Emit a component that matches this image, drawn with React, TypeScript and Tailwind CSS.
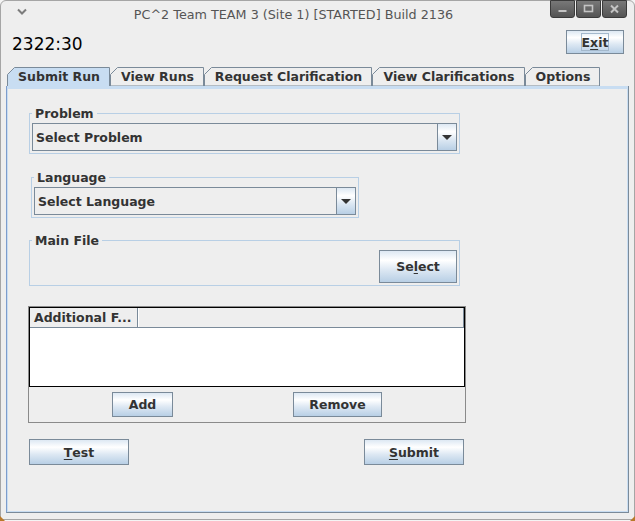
import React from "react";

const GRAD =
  "bg-[linear-gradient(to_bottom,#dde8f3_0%,#ffffff_30%,#dde8f3_60%,#b8cfe5_100%)]";

function Button({
  w,
  h,
  children,
}: {
  w: string;
  h: string;
  children: React.ReactNode;
}) {
  return (
    <div
      className={`${w} ${h} ${GRAD} flex shrink-0 items-center justify-center border border-[#7a8a99] text-[12.5px] leading-[15px] font-bold text-[#333333]`}
    >
      {children}
    </div>
  );
}

function U({ children }: { children: React.ReactNode }) {
  return (
    <span className="underline decoration-1 underline-offset-[2px]">
      {children}
    </span>
  );
}

function Combo({ w, h, label }: { w: string; h: string; label: string }) {
  return (
    <div className={`${w} ${h} flex border border-[#7a8a99] bg-[#eeeeee]`}>
      <div className="flex flex-1 items-center pl-[3px] text-[12.5px] leading-[15px] font-bold text-[#333333]">
        {label}
      </div>
      <div
        className={`${GRAD} flex w-[19px] items-center justify-center border-l border-[#7a8a99]`}
      >
        <svg width="10" height="5" viewBox="0 0 10 5">
          <path d="M0 0H10L5 5Z" fill="#333333" />
        </svg>
      </div>
    </div>
  );
}

type Tab = { label: string; w: string; px: number; sel?: boolean };

const tabs: Tab[] = [
  { label: "Submit Run", w: "w-[103px]", px: 103, sel: true },
  { label: "View Runs", w: "w-[94px]", px: 94 },
  { label: "Request Clarification", w: "w-[168px]", px: 168 },
  { label: "View Clarifications", w: "w-[153px]", px: 153 },
  { label: "Options", w: "w-[75px]", px: 75 },
];

function TabItem({ t }: { t: Tab }) {
  const W = t.px;
  return (
    <div
      className={`${t.w} relative flex h-[19px] shrink-0 items-center justify-center pl-[1px] text-[12.5px] leading-[15px] font-bold whitespace-nowrap text-[#333333]`}
    >
      <svg
        className="absolute inset-0"
        width={W}
        height={19}
        viewBox={`0 0 ${W} 19`}
      >
        <path
          d={`M0.5 19V7.5L7.5 0.5H${W - 0.5}V19${t.sel ? "" : "H0.5"}`}
          fill={t.sel ? "#c8ddf2" : "#eeeeee"}
          stroke="#7a8a99"
          strokeWidth="1"
        />
      </svg>
      <span className="relative">{t.label}</span>
    </div>
  );
}

function Ctrl({ kind }: { kind: "min" | "max" | "close" }) {
  return (
    <div className="flex h-[18px] w-[25px] items-center justify-center rounded-b-[3px] border border-[#3a3a3a] bg-[linear-gradient(to_bottom,#787878,#545454)]">
      <svg width="11" height="10" viewBox="0 0 11 10">
        {kind === "min" && <rect x="1.5" y="6" width="8" height="2" fill="#c4c4c4" />}
        {kind === "max" && (
          <rect
            x="1.5"
            y="1.5"
            width="8"
            height="6"
            fill="none"
            stroke="#c4c4c4"
            strokeWidth="1.6"
          />
        )}
        {kind === "close" && (
          <path
            d="M2 1.5L9 8.5M9 1.5L2 8.5"
            stroke="#c4c4c4"
            strokeWidth="2"
          />
        )}
      </svg>
    </div>
  );
}

export default function App() {
  return (
    <div className="relative h-[521px] w-[635px] overflow-hidden bg-[#f4f4f4] font-['DejaVu_Sans',sans-serif]">
      <div className="flex h-[520px] w-[635px] flex-col rounded-t-[6px] border border-[#a5a5a5] bg-[#eeeeee]">
        {/* title bar */}
        <div className="flex h-[21px] shrink-0 items-start">
          <div className="w-[36px] shrink-0">
            <svg
              className="mt-[7px] ml-[16px]"
              width="10"
              height="7"
              viewBox="0 0 10 7"
            >
              <path
                d="M1 1.5L5 5.5L9 1.5"
                fill="none"
                stroke="#7c7c7c"
                strokeWidth="2"
              />
            </svg>
          </div>
          <div className="flex-1 pt-[6px] text-center text-[12.75px] leading-[15px] whitespace-nowrap text-[#555555]">
            PC^2 Team TEAM 3 (Site 1) [STARTED] Build 2136
          </div>
          <div className="mt-[-1px] mr-[7px] flex gap-[1px]">
            <Ctrl kind="min" />
            <Ctrl kind="max" />
            <Ctrl kind="close" />
          </div>
        </div>

        {/* clock + exit */}
        <div className="mt-[8px] flex shrink-0 items-start justify-between">
          <div className="ml-[11px] pt-[4px] text-[17px] leading-[20px] text-black">
            2322:30
          </div>
          <div className="mr-[10px]">
            <Button w="w-[58px]" h="h-[24px]">
              <span className="flex h-[18px] items-center border border-[#a3b8cc]">
                E<U>x</U>it
              </span>
            </Button>
          </div>
        </div>

        {/* tabs */}
        <div className="mt-[13px] ml-[6px] flex shrink-0">
          {tabs.map((t) => (
            <TabItem key={t.label} t={t} />
          ))}
        </div>

        {/* panel */}
        <div className="ml-[5px] h-[427px] w-[623px] shrink-0 border-x border-b border-l-[#7d9ccc] border-r-[#7a8a99] border-b-[#7a8a99]">
          <div className="flex h-full flex-col items-start border-x border-t-[3px] border-b border-[#c8ddf2]">
            {/* Problem */}
            <fieldset className="mt-[17px] ml-[21px] w-[431px] border border-[#b8cfe5] px-[2px] pt-[2px] pb-[2px]">
              <legend className="px-[3px] text-[12.5px] leading-[15px] font-bold text-[#333333]">
                Problem
              </legend>
              <Combo w="w-[425px]" h="h-[28px]" label="Select Problem" />
            </fieldset>

            {/* Language */}
            <fieldset className="mt-[16px] ml-[23px] w-[328px] border border-[#b8cfe5] px-[2px] pt-[2px] pb-[2px]">
              <legend className="px-[3px] text-[12.5px] leading-[15px] font-bold text-[#333333]">
                Language
              </legend>
              <Combo w="w-[322px]" h="h-[28px]" label="Select Language" />
            </fieldset>

            {/* Main File */}
            <fieldset className="mt-[15px] ml-[21px] w-[431px] border border-[#b8cfe5] px-[2px] pt-[2px] pb-[2px]">
              <legend className="px-[3px] text-[12.5px] leading-[15px] font-bold text-[#333333]">
                Main File
              </legend>
              <div className="flex justify-end">
                <Button w="w-[78px]" h="h-[33px]">
                  Se<U>l</U>ect
                </Button>
              </div>
            </fieldset>

            {/* Additional files */}
            <div className="mt-[20px] ml-[20px] w-[438px] border border-[#8a8a8a]">
              <div className="flex h-[80px] flex-col border border-black bg-white">
                <div className="flex h-[20px] shrink-0 border-b border-[#7a8a99] bg-[#eeeeee]">
                  <div className="flex w-[108px] items-center overflow-hidden border-r border-[#7a8a99] pl-[4px] text-[12.5px] leading-[15px] font-bold whitespace-nowrap text-[#333333]">
                    Additional F...
                  </div>
                  <div className="flex-1 border-r border-l border-l-white border-r-[#7a8a99]" />
                </div>
                <div className="flex-1 bg-white" />
              </div>
              <div className="flex pt-[5px] pb-[5px]">
                <div className="ml-[83px]">
                  <Button w="w-[61px]" h="h-[25px]">
                    Add
                  </Button>
                </div>
                <div className="ml-[120px]">
                  <Button w="w-[89px]" h="h-[25px]">
                    Remove
                  </Button>
                </div>
              </div>
            </div>

            {/* Test / Submit */}
            <div className="mt-[16px] ml-[21px] flex w-[435px] justify-between">
              <Button w="w-[100px]" h="h-[26px]">
                <U>T</U>est
              </Button>
              <Button w="w-[100px]" h="h-[26px]">
                <U>S</U>ubmit
              </Button>
            </div>
          </div>
        </div>
      </div>

      {/* resize grips */}
      <svg className="absolute bottom-0 left-0" width="5" height="5" viewBox="0 0 5 5">
        <path d="M0 0L5 5H0Z" fill="#b9792a" />
      </svg>
      <svg className="absolute right-0 bottom-0" width="5" height="5" viewBox="0 0 5 5">
        <path d="M5 0V5H0Z" fill="#b9792a" />
      </svg>
    </div>
  );
}
